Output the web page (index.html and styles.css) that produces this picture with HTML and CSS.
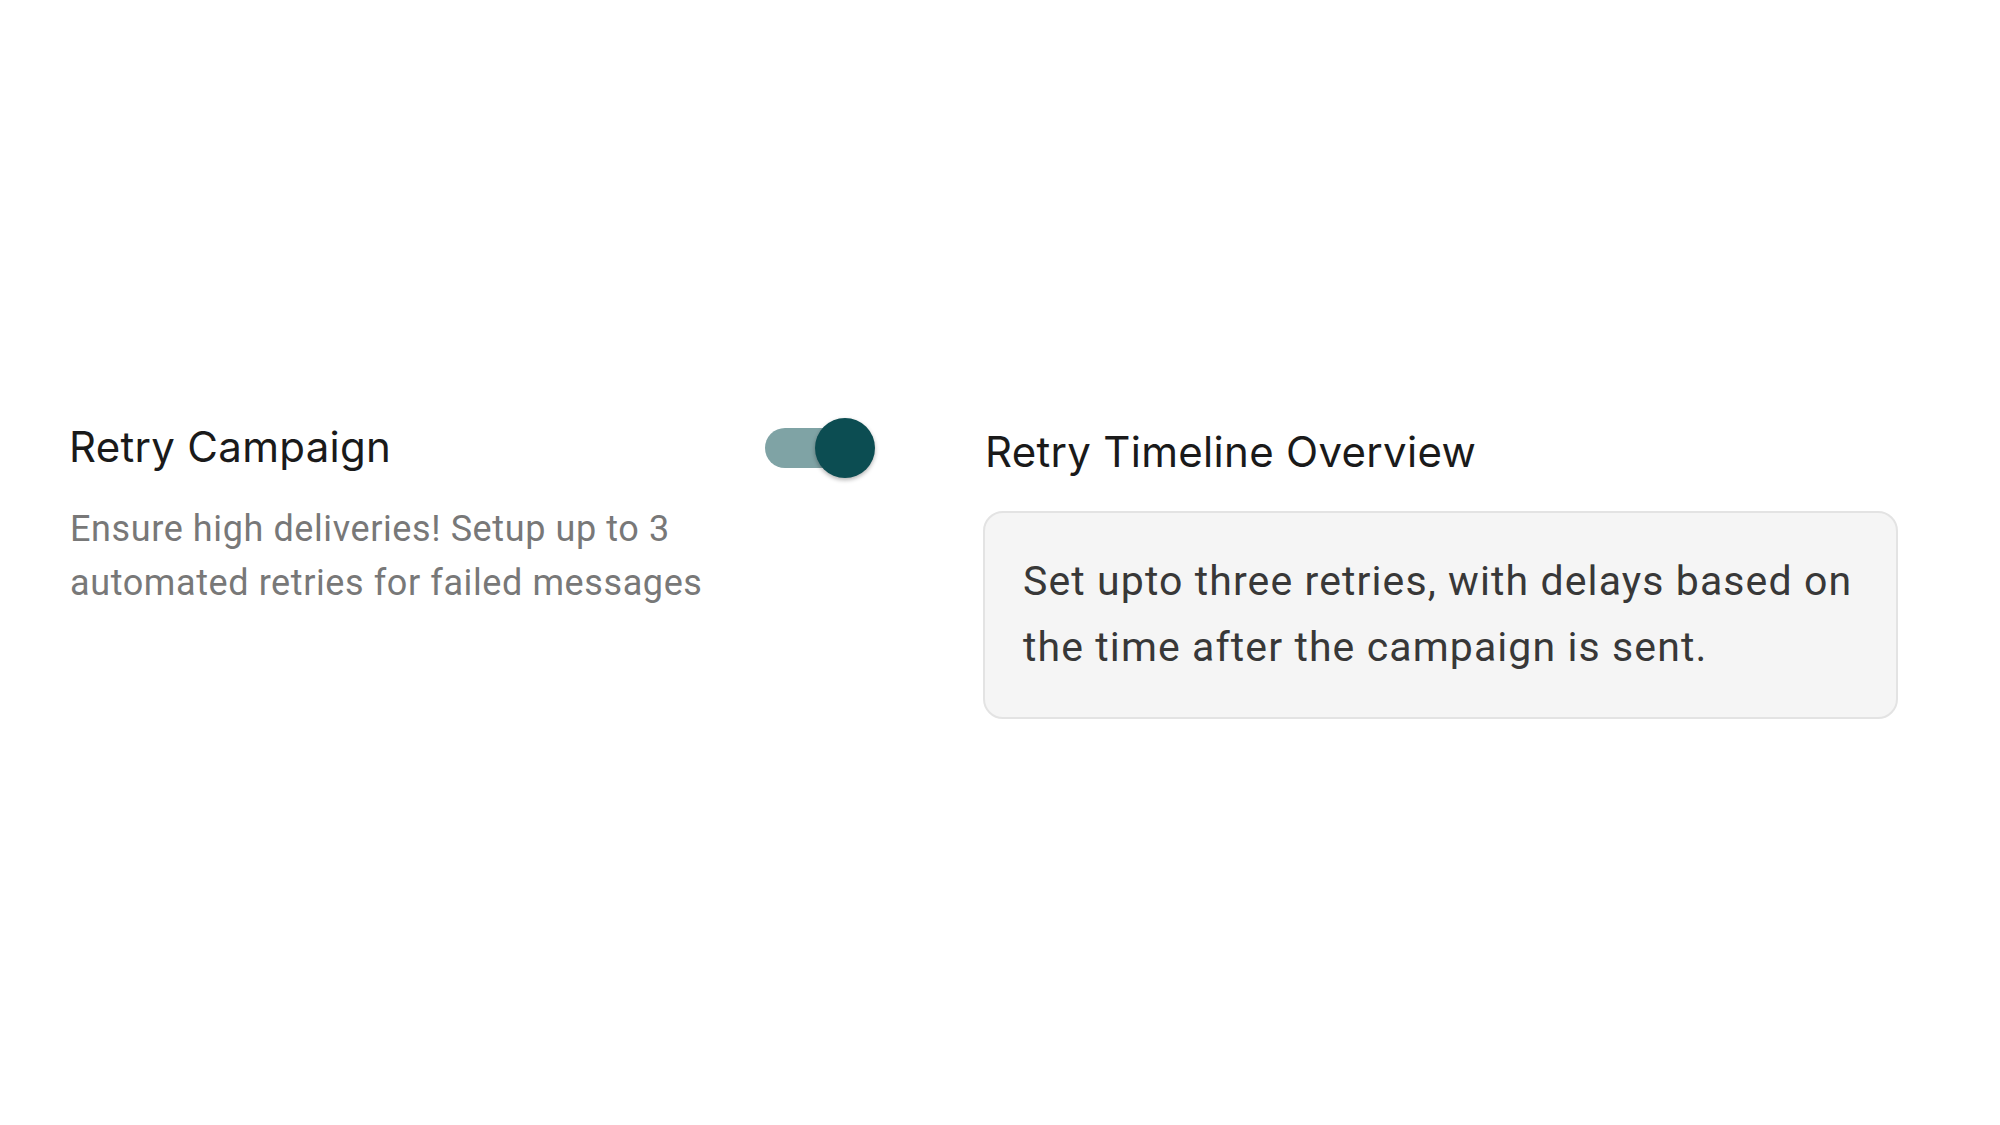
FILE: index.html
```html
<!DOCTYPE html>
<html lang="en">
<head>
<meta charset="utf-8">
<title>Retry Campaign</title>
<link rel="stylesheet" href="styles.css">
</head>
<body>
<main class="page">
  <section class="setting">
    <div class="setting-text">
      <h2 class="setting-title">Retry Campaign</h2>
      <p class="setting-desc">Ensure high deliveries! Setup up to 3 automated retries for failed messages</p>
    </div>
    <div class="toggle" role="switch" aria-checked="true">
      <span class="toggle-track"></span>
      <span class="toggle-knob"></span>
    </div>
    <div class="overview">
      <h2 class="overview-title">Retry Timeline Overview</h2>
      <div class="overview-box">Set upto three retries, with delays based on the time after the campaign is sent.</div>
    </div>
  </section>
</main>
</body>
</html>
```
FILE: styles.css
```css
html, body {
  margin: 0;
  padding: 0;
  background: #ffffff;
}

.page {
  width: 2000px;
  height: 1125px;
  box-sizing: border-box;
  padding-top: 418px;
  padding-left: 68px;
}

.setting {
  display: flex;
  align-items: flex-start;
}

.setting-text {
  flex: 0 0 697px;
  margin-top: 5px;
}

.setting-title {
  margin: 0 0 0 1px;
  font-family: "Inter", "Noto Sans", sans-serif;
  font-weight: 400;
  font-size: 42px;
  line-height: 48px;
  letter-spacing: 0.3px;
  color: #1a1a1a;
}

.setting-desc {
  margin: 31px 0 0 2px;
  font-family: "Roboto", "Liberation Sans", sans-serif;
  font-size: 36px;
  line-height: 54px;
  letter-spacing: 0.6px;
  color: #787878;
  width: 670px;
}

.toggle {
  position: relative;
  flex: 0 0 110px;
  height: 60px;
}

.toggle-track {
  position: absolute;
  left: 0;
  top: 10px;
  width: 95px;
  height: 40px;
  border-radius: 20px;
  background: #7fa3a5;
}

.toggle-knob {
  position: absolute;
  left: 50px;
  top: 0;
  width: 60px;
  height: 60px;
  border-radius: 50%;
  background: #0c4d52;
  box-shadow: 0 2px 4px rgba(0, 0, 0, 0.3);
}

.overview {
  margin-left: 108px;
  margin-top: 10px;
  width: 915px;
}

.overview-title {
  margin: 0 0 0 2px;
  font-family: "Inter", "Noto Sans", sans-serif;
  font-weight: 400;
  font-size: 42px;
  line-height: 48px;
  letter-spacing: 0.3px;
  color: #1a1a1a;
}

.overview-box {
  margin-top: 35px;
  box-sizing: border-box;
  width: 915px;
  padding: 35px 34px 37px 38px;
  background: #f5f5f5;
  border: 2px solid #e3e3e3;
  border-radius: 20px;
  font-family: "Roboto", "Liberation Sans", sans-serif;
  font-size: 41px;
  line-height: 66px;
  letter-spacing: 1.1px;
  color: #383838;
}
```
